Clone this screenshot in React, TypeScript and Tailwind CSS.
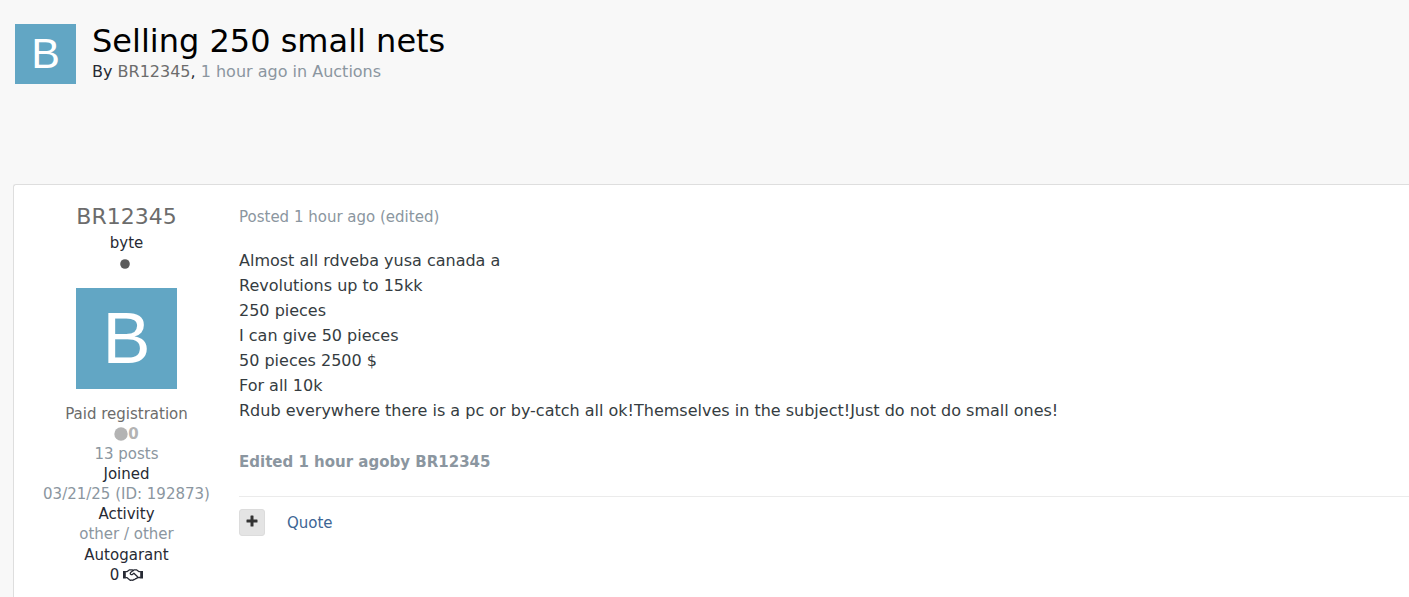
const lines = [
  "Almost all rdveba yusa canada a",
  "Revolutions up to 15kk",
  "250 pieces",
  "I can give 50 pieces",
  "50 pieces 2500 $",
  "For all 10k",
  "Rdub everywhere there is a pc or by-catch all ok!Themselves in the subject!Just do not do small ones!",
];

function Handshake() {
  return (
    <svg viewBox="0 0 20 12" className="h-3 w-5" fill="none" stroke="currentColor" aria-hidden="true">
      <path d="M0 2h2.8v7.4H0zM17.2 2H20v7.4h-2.8z" fill="currentColor" stroke="none" />
      <path
        d="M2.8 2.6h1.4L6.6.8h2.6l1.2.8M2.8 8.6h1l3 2.3c.7.5 1.5.5 2 .1.8.5 1.7.2 2-.5.8.2 1.5-.2 1.8-.9.8.1 1.5-.3 1.7-1.1h2.9M17.2 2.6h-1.4L13.4.8h-2.2L7.6 3.6c-.6.6-.4 1.5.3 1.9.6.3 1.2.2 1.7-.2l1.3-1.1 3.4 3.3"
        strokeWidth="1.3"
        strokeLinejoin="round"
        strokeLinecap="round"
      />
    </svg>
  );
}

function Header() {
  return (
    <header className="flex gap-4 px-[15px] pt-6">
      <a
        href="#profile"
        aria-label="BR12345"
        className="flex h-[60px] w-[61px] shrink-0 items-center justify-center bg-[#62a6c4] pb-0.5 font-['Liberation_Sans'] text-[43px] leading-none text-white"
      >
        B
      </a>
      <div>
        <h1 className="text-[32px] leading-[34px] text-black">Selling 250 small nets</h1>
        <p className="text-[16px] leading-7 text-[#8b96a0]">
          <span className="text-[#272a34]">By </span>
          <a href="#profile" className="text-[#6c6c6c]">BR12345</a>
          <span className="text-[#272a34]">, </span>
          1 hour ago in <a href="#auctions">Auctions</a>
        </p>
      </div>
    </header>
  );
}

function Author() {
  return (
    <aside className="w-[225px] shrink-0 pt-[15px] text-center text-[15px] leading-5 text-[#272a34]">
      <h2 className="text-[22px] leading-[33px] text-[#6c6c6c]">
        <a href="#profile">BR12345</a>
      </h2>
      <p>byte</p>
      <div className="flex justify-center pt-1.5 pr-1">
        <svg viewBox="0 0 10 10" className="size-2.5" aria-hidden="true">
          <circle cx="5" cy="5" r="4.8" fill="#5a5a5a" />
        </svg>
      </div>
      <a
        href="#profile"
        aria-label="BR12345"
        className="mx-auto mt-[19px] flex size-[101px] items-center justify-center bg-[#62a6c4] pb-0.5 font-['Liberation_Sans'] text-[72px] leading-none text-white"
      >
        B
      </a>
      <div className="mt-[15px] flex flex-col">
        <div>
          <p className="text-[#6c6c6c]">Paid registration</p>
          <p className="flex items-center justify-center font-bold text-[#b3b3b3]">
            <svg viewBox="0 0 14 14" className="size-3.5" aria-hidden="true">
              <circle cx="7" cy="7" r="6.7" fill="currentColor" />
            </svg>
            0
          </p>
          <p className="text-[#8b96a0]">13 posts</p>
        </div>
        <div>
          <p>Joined</p>
          <p className="text-[#8b96a0]">03/21/25 (ID: 192873)</p>
        </div>
        <div>
          <p>Activity</p>
          <p className="text-[#8b96a0]">other / other</p>
        </div>
        <div className="pt-px">
          <p>Autogarant</p>
          <p className="flex items-center justify-center gap-1">
            0 <Handshake />
          </p>
        </div>
      </div>
    </aside>
  );
}

export default function App() {
  return (
    <div className="min-h-screen overflow-x-hidden bg-[#f8f8f8] font-['DejaVu_Sans',sans-serif]">
      <Header />
      <article className="mt-[98px] ml-[13px] flex min-h-[413px] rounded-tl-[3px] border-t border-l border-[#dedede] bg-white">
        <Author />
        <div className="min-w-0 grow pt-5">
          <p className="text-[15px] leading-6 text-[#8b96a0]">Posted 1 hour ago (edited)</p>
          <div className="mt-[19px] text-[16px] leading-[25px] text-[#353c41]">
            {lines.map((line) => (
              <p key={line}>{line}</p>
            ))}
          </div>
          <p className="mt-[27px] text-[15px] leading-[25px] font-bold text-[#8b96a0]">
            Edited 1 hour agoby BR12345
          </p>
          <div className="mt-[21px] flex items-center border-t border-[#ebebeb] pt-3">
            <button
              type="button"
              aria-label="Add to multi-quote"
              className="flex h-[27px] w-[26px] items-center justify-center rounded-[3px] border border-[#dcdcdc] bg-[#e4e4e4] pb-[3px] text-[#333]"
            >
              <svg viewBox="0 0 12 12" className="size-3" aria-hidden="true">
                <path
                  d="M4.5 1q0-.5.5-.5h2q.5 0 .5.5v3.5H11q.5 0 .5.5v2q0 .5-.5.5H7.5V11q0 .5-.5.5H5q-.5 0-.5-.5V7.5H1q-.5 0-.5-.5V5q0-.5.5-.5h3.5z"
                  fill="currentColor"
                />
              </svg>
            </button>
            <a href="#quote" className="ml-[22px] pt-px text-[15px] leading-5 text-[#3d6594]">
              Quote
            </a>
          </div>
        </div>
      </article>
    </div>
  );
}
